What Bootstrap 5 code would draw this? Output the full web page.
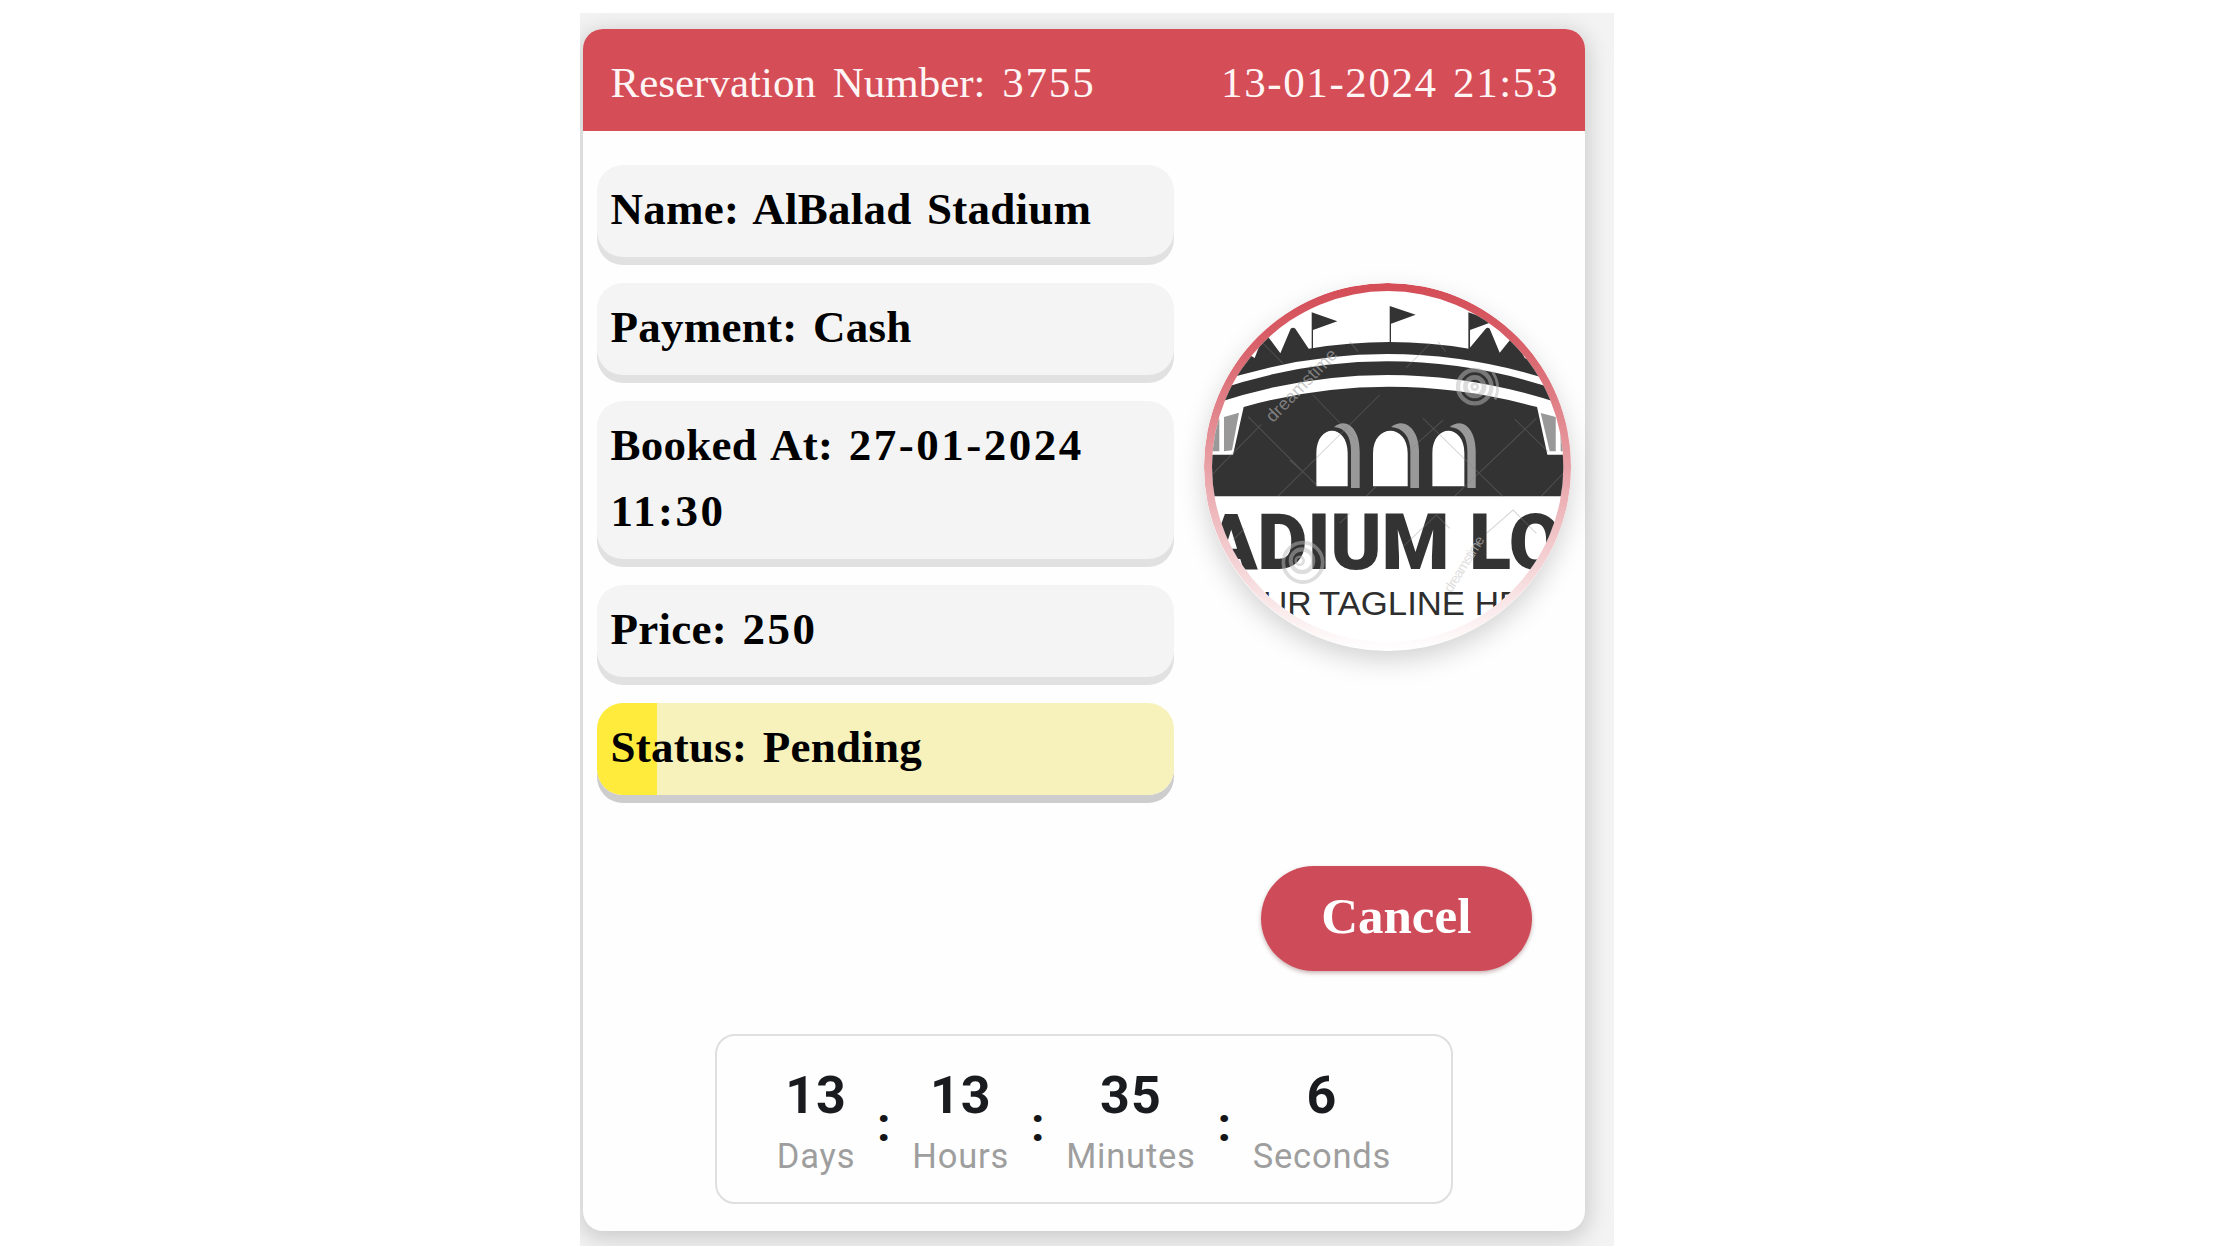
<!DOCTYPE html>
<html lang="en">
<head>
<meta charset="utf-8">
<title>Reservation 3755</title>
<link rel="stylesheet" href="https://cdn.jsdelivr.net/npm/bootstrap@5.3.0/dist/css/bootstrap.min.css">
<style>
body{background:#fff;font-family:"Liberation Serif",serif;overflow:hidden}
.stage{width:1034px;height:1233px;margin:13px 0 0 580px;padding:15.5px 29px 0 3px;background:#f3f3f3;overflow:hidden}
.ticket{height:1202.5px;border:0;border-radius:20px;background:#fefefe;box-shadow:0 5px 22px 3px rgba(0,0,0,.17);overflow:visible}
.ticket-head{height:102.2px;padding:21.5px 26px 0 27.5px;border-radius:20px 20px 0 0;background:#d54d57;color:#fff5f5;font-size:43px;line-height:66px;word-spacing:6px}
.digits{letter-spacing:1.8px}
.issued{letter-spacing:1.6px;word-spacing:3px}
.info{padding:34.5px 14px 0 13.5px}
.fields{width:577.5px;gap:18.5px}
.pill{padding:10.5px 12px 15px 14px;margin-bottom:8px;border-radius:26px;background:#f4f4f4;box-shadow:0 8px 0 #e1e1e1;color:#000;font-size:45px;font-weight:700;line-height:66px;letter-spacing:.25px;word-spacing:4px}
.pill .digits{letter-spacing:2.5px}
.pending{background:linear-gradient(90deg,#ffeb3b 59.5px,#f7f2bc 59.5px);box-shadow:0 8px 0 #cdcdcd}
.logo{width:367.4px;height:367.4px;border-radius:50%;margin-top:118px;box-shadow:0 10px 26px rgba(0,0,0,.17)}
.cancel{width:271.5px;height:105.5px;margin:63px 53px 0 0;padding:0 0 4px;border:0;border-radius:53px;background:#ce4c59;color:#fff;font-size:51px;font-weight:700;line-height:66px;box-shadow:0 2px 4px rgba(80,0,0,.3)}
.timer{width:738px;height:170px;margin-top:63px;padding-top:24.5px;border:2px solid #dfdfdf;border-radius:20px;font-family:Roboto,sans-serif}
.num{font-size:52px;font-weight:700;line-height:70px;letter-spacing:1px;color:#1a1b1f}
.unit{font-size:34.5px;line-height:50px;letter-spacing:.8px;color:#9e9e9e}
.sep{width:57px;padding-top:29px;text-align:center;font-size:48px;font-weight:700;line-height:70px;color:#141518}
</style>
<script src="https://cdn.jsdelivr.net/npm/bootstrap@5.3.0/dist/js/bootstrap.bundle.min.js"></script>
</head>
<body>
<main class="stage">
<article class="card ticket">
  <header class="ticket-head d-flex justify-content-between">
    <span>Reservation Number: <span class="digits">3755</span></span>
    <time class="issued">13-01-2024 21:53</time>
  </header>
  <section class="info d-flex justify-content-between align-items-start">
    <div class="fields d-flex flex-column">
      <div class="pill">Name: AlBalad Stadium</div>
      <div class="pill">Payment: Cash</div>
      <div class="pill">Booked At: <span class="digits">27-01-2024 11:30</span></div>
      <div class="pill">Price: <span class="digits">250</span></div>
      <div class="pill pending">Status: Pending</div>
    </div>
    <svg class="logo flex-shrink-0" viewBox="43 39 1102 1102" role="img" aria-label="Stadium logo">
      <defs>
        <clipPath id="disc"><circle cx="594" cy="590" r="527"/></clipPath>
        <linearGradient id="rim" x1="0" y1="0" x2="0" y2="1"><stop offset="0" stop-color="#d44c56"/><stop offset=".15" stop-color="#d85e67"/><stop offset="1" stop-color="#fff"/></linearGradient>
      </defs>
      <circle cx="594" cy="590" r="551" fill="url(#rim)"/>
      <g clip-path="url(#disc)">
        <rect x="43" y="39" width="1102" height="1102" fill="#fff"/>
        <g fill="#333">
          <path d="M40 351V330L130 290L185 258L195 264L218 205L235 200L272 250L303 176Q310 171 317 176L357 236Q602 196 838 236L888 176Q894 171 900 176L930 248L965 205L985 222L1005 264L1060 290L1146 330V351Q593 153 40 351Z"/>
          <path d="M366 127L443 154L370 180V237H366ZM600 108L678 134L604 161V218H600ZM836 127L913 154L841 180V237H836Z"/>
          <path d="M40 374Q593 174 1146 374V412Q593 218 40 412Z"/>
          <path d="M162 411Q593 290 1042 411L1073 554H1140V679H50V554H130Z"/>
        </g>
        <g fill="#999">
          <path d="M103 441L148 428L127 541L103 544ZM50 456L89 446V544H50ZM1053 429L1098 441V544H1080ZM1112 446L1140 456V544H1113Z"/>
          <path d="M433 471C472 440 510 478 510 544V654H484V544C484 500 467 473 433 471Z"/>
          <path d="M604 471C645 440 688 478 688 544V654H662V544C662 500 640 473 604 471Z"/>
          <path d="M780 471C820 440 858 478 858 544V654H833V544C833 500 815 473 780 471Z"/>
        </g>
        <path fill="#fff" d="M380 649V550C380 460 474 460 474 550V649ZM550 649V550C550 460 654 460 654 550V649ZM728 649V550C728 460 824 460 824 550V649Z"/>
        <g fill="#333" font-family="Roboto,sans-serif" font-weight="900" font-size="233">
          <text x="45" y="896" textLength="735">ADIUM</text>
          <text x="838" y="896">LO</text>
        </g>
        <g fill="#2e2e2e" font-family="'Liberation Sans',sans-serif" font-size="101">
          <text x="220" y="1035">UR</text>
          <text x="388" y="1035" textLength="438" lengthAdjust="spacingAndGlyphs">TAGLINE</text>
          <text x="855" y="1035">HE</text>
        </g>
        <g fill="none" stroke="#888" stroke-opacity=".34" stroke-width="3">
          <path d="M80 600L215 463M175 440L385 650M215 215L280 280M370 375L500 510M265 678L570 375M480 215L505 245M650 293L720 222M745 215L768 245M700 445L940 680M660 540L760 450M530 678L560 648M795 678L1040 445M975 447L1075 545M1055 678L1120 610M70 612L85 595M300 570L345 610M450 760L480 730M640 830L740 735L780 775M130 810L165 775M890 790L970 720L1040 790"/>
        </g>
        <g fill="none" stroke="#bbb" stroke-opacity=".5">
          <path d="M916 388Q935 345 908 305" stroke-width="8"/>
          <circle cx="855" cy="350" r="50" stroke-width="13"/><circle cx="855" cy="350" r="28" stroke-width="14"/><circle cx="855" cy="350" r="9" stroke-width="8"/>
          <circle cx="340" cy="877" r="59" stroke-width="11"/><circle cx="337" cy="872" r="34" stroke-width="12"/><circle cx="330" cy="872" r="12" stroke-width="8"/>
        </g>
        <g font-family="'Liberation Sans',sans-serif" fill="#aaa" fill-opacity=".65" font-size="54">
          <text transform="translate(250 460) rotate(-46)" textLength="283">dreamstime</text>
          <text transform="translate(785 970) rotate(-58)" textLength="190" font-size="42" fill="#ccc">dreamstime</text>
        </g>
      </g>
    </svg>
  </section>
  <div class="d-flex justify-content-end"><button type="button" class="btn cancel">Cancel</button></div>
  <section class="timer d-flex justify-content-center align-self-center text-center">
    <div><div class="num">13</div><div class="unit">Days</div></div>
    <div class="sep">:</div>
    <div><div class="num">13</div><div class="unit">Hours</div></div>
    <div class="sep">:</div>
    <div><div class="num">35</div><div class="unit">Minutes</div></div>
    <div class="sep">:</div>
    <div><div class="num">6</div><div class="unit">Seconds</div></div>
  </section>
</article>
</main>
</body>
</html>
